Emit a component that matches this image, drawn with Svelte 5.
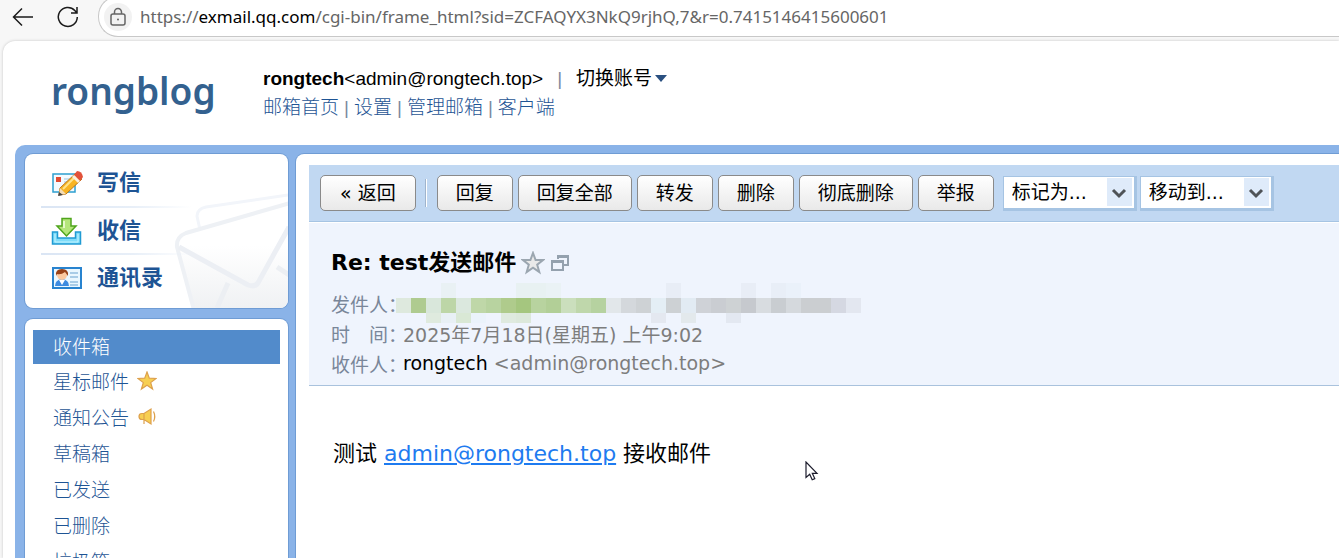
<script lang="ts">
	const folders = [
		{ name: '收件箱', active: true },
		{ name: '星标邮件', icon: 'star' },
		{ name: '通知公告', icon: 'horn' },
		{ name: '草稿箱' },
		{ name: '已发送' },
		{ name: '已删除' },
		{ name: '垃圾箱' }
	];

	const actions = ['回复', '回复全部', '转发', '删除', '彻底删除', '举报'];

	// masked sender: one colour per 15px cell
	const cells = [
		'#dee9de', '#afcb90', '#d9e7db', '#bdd6a7', '#dbe8de', '#bfd7a8', '#b8d3a0', '#afcb8c',
		'#a5c67f', '#b8d39f', '#b2cf97', '#cbdfbd', '#bfd7ab', '#b6d2a0', '#e2e7ea', '#d4d8dc',
		'#ced2d5', '#e4eef5', '#cdd1d4', '#e2ebf3', '#cfd2d7', '#cacdd2', '#ced2d4', '#c6c9ce',
		'#d8dce0', '#c9cdd1', '#d5d9dd', '#cbced1', '#cbced1', '#d5d8e2', '#e3e7f0'
	];
	const cellsAbove = [
		[3, '#e9f1f4'], [8, '#e8f1f2'], [9, '#e8f1f2'], [10, '#eaf2f5'],
		[18, '#e8edf6'], [23, '#e8edf6'], [25, '#e8eef7'], [26, '#eaf1fa']
	] as [number, string][];
	const cellsBelow = [
		[2, '#dfeade'], [3, '#e8f0f5'], [4, '#d9e8d5'], [5, '#ebf3fb'], [7, '#dfeadf'],
		[8, '#dce8db'], [17, '#e4e8f0'], [19, '#e3e9ec'], [22, '#e3e8f1']
	] as [number, string][];
</script>

<div class="browser">
	<header class="bar">
		<button class="nav" aria-label="Back">
			<svg width="22" height="22" viewBox="0 0 22 22"><path d="M21 11H1.500M10 2.500 1.500 11l8.500 8.500" /></svg>
		</button>
		<button class="nav" aria-label="Reload">
			<svg width="22" height="22" viewBox="0 0 22 22"><path d="M20.300 11A9.500 9.500 0 1 1 17.800 4.500L19.500 6.500M20 1v6h-6" /></svg>
		</button>
		<div class="address">
			<span class="lock">
				<svg width="18" height="20" viewBox="0 0 18 20">
					<rect x="2" y="7" width="14" height="11" rx="2" />
					<path d="M5.500 7V5a3.500 3.500 0 0 1 7 0v2" />
					<circle cx="9" cy="12.500" r="1" />
				</svg>
			</span>
			<span class="url">https://<b>exmail.qq.com</b>/cgi-bin/frame_html?sid=ZCFAQYX3NkQ9rjhQ,7&amp;r=0.7415146415600601</span>
		</div>
	</header>

	<div class="page">
		<header class="top">
			<div class="logo">rongblog</div>
			<div class="account">
				<div class="who">
					<span><strong>rongtech</strong>&lt;admin@rongtech.top&gt;</span>
					<i>|</i>
					<button class="switch">切换账号<svg width="12" height="8" viewBox="0 0 12 8"><path d="M0 0h12L6 7z" /></svg></button>
				</div>
				<nav class="links">
					<a href="#home">邮箱首页</a><i>|</i><a href="#settings">设置</a><i>|</i><a href="#manage">管理邮箱</a><i>|</i><a href="#client">客户端</a>
				</nav>
			</div>
		</header>

		<div class="frame">
			<aside>
				<nav class="card main-nav">
					<svg class="envelope" width="116" height="116" viewBox="0 0 116 116">
						<defs>
							<linearGradient id="paper" x1="0" y1="0" x2="0" y2="1">
								<stop offset="0.400" stop-color="#fff" />
								<stop offset="1" stop-color="#eff1f3" />
							</linearGradient>
						</defs>
						<path d="M116 3 34 15q-9 2-9 9l3 14" fill="none" stroke="#f2f5fa" stroke-width="3" />
						<path d="M118 11 14 41q-10 4-9 14l17 63h96z" fill="url(#paper)" stroke="#eef1f5" stroke-width="4" />
						<path d="M7 55l69 38q8 3 11-4l30-54" fill="none" stroke="#eceff4" stroke-width="5" />
						<path d="M56 91 45 116M105 75l12 8" fill="none" stroke="#eceff3" stroke-width="5" />
					</svg>
					<a href="#compose">
						<svg width="32" height="28" viewBox="0 0 32 28">
							<rect x="2" y="5" width="22" height="18" fill="#f3faff" stroke="#2d9fd0" stroke-width="1.500" />
							<rect x="5" y="8" width="5" height="5" fill="#e04b32" />
							<path d="M13 10h6M13 13h3" stroke="#9fc4dc" />
							<path d="M9 19 25 4l6 6-16 15-7 1z" fill="#f8b422" stroke="#b9761a" />
							<path d="M12 20 26 6" stroke="#ffe38b" stroke-width="2" />
							<path d="m23 6 3-4q5 0 6 6l-3 4z" fill="#e2523a" />
							<path d="m21 8 2-2 6 6-2 2z" fill="#fbeede" />
							<path d="m9 19-1 7 7-1z" fill="#f4dcb5" />
							<path d="m8 23-1 4 5-1z" fill="#444" />
						</svg>
						写信
					</a>
					<a href="#receive">
						<svg width="32" height="28" viewBox="0 0 32 28">
							<path d="M1.500 15h5v6h18v-6h5v12h-28z" fill="#7fdcf9" stroke="#209bd3" stroke-width="1.500" />
							<path d="M4 17v8h23v-8" fill="none" stroke="#c4f3ff" />
							<path d="M11 1.500h9V9h5l-9.500 10L6 9h5z" fill="#b4e67a" stroke="#4fa51c" stroke-width="1.500" />
							<path d="M13 4v7" stroke="#e5f9ca" stroke-width="2" />
						</svg>
						收信
					</a>
					<a href="#contacts">
						<svg width="32" height="28" viewBox="0 0 32 28">
							<rect x="2" y="4" width="28" height="20" fill="#e9f7ff" stroke="#2883cf" stroke-width="2" />
							<path d="M4 22q0-6 7-7 7 1 7 7z" fill="#3d8be0" />
							<path d="m8 16 3 5 3-5z" fill="#fff" />
							<circle cx="11" cy="11" r="5" fill="#fbc9a0" />
							<path d="M5 12q-1-7 6-7 7 0 6 7l-3-4q-4 3-8 2z" fill="#984219" />
							<path d="M19 9h8M19 13h8M19 18h8M19 21h8" stroke="#93bedf" stroke-width="1.500" />
						</svg>
						通讯录
					</a>
				</nav>

				<nav class="card folders">
					{#each folders as folder}
						<a href="#{folder.name}" class:active={folder.active}>
							{folder.name}
							{#if folder.icon === 'star'}
								<svg width="20" height="20" viewBox="0 0 20 20"><path d="m10 1 2.300 6.200 6.700.3-5.300 4.100L15.600 18 10 14.300 4.400 18l1.900-6.400L1 7.500l6.700-.3z" /></svg>
							{:else if folder.icon === 'horn'}
								<svg width="20" height="20" viewBox="0 0 20 20"><path d="M5 6.500h2L14 2v15l-7-4.500H5q-3 0-3-3t3-3zM7 6.500V17" /><path class="wave" d="M16.500 4.500q2.500 5 0 10" /></svg>
							{/if}
						</a>
					{/each}
				</nav>
			</aside>

			<main>
				<div class="toolbar">
					<button class="back">« 返回</button>
					<span class="divider"></span>
					{#each actions as action}
						<button>{action}</button>
					{/each}
					<div class="selects">
						{#each ['标记为...', '移动到...'] as option}
							<span class="select">
								<select aria-label={option}><option>{option}</option></select>
								<svg width="16" height="12" viewBox="0 0 16 12"><path d="m2 2 6 6 6-6" /></svg>
							</span>
						{/each}
					</div>
				</div>

				<section class="head">
					<h1>
						Re: test发送邮件
						<svg width="24" height="24" viewBox="0 0 24 24"><path d="m12 2 2.600 7H22l-5.800 4.700L18.300 21 12 16.700 5.700 21l2.100-7.300L2 9h7.400z" fill="#e9e9e9" stroke="#9ba6b0" stroke-width="2" /></svg>
						<svg class="window" width="20" height="20" viewBox="0 0 20 20"><path d="M8 6V3h10v9h-4M8 4h10M2 8h11v9H2zM2 9h11" /></svg>
					</h1>
					<dl>
						<div>
							<dt>发件人：</dt>
							<dd>
								<svg width="465" height="40" viewBox="0 0 465 40" shape-rendering="crispEdges">
									{#each cells as fill, i}
										<rect x={i * 15} y="15" width="15" height="15" {fill} />
									{/each}
									{#each cellsAbove as [i, fill]}
										<rect x={i * 15} y="0" width="15" height="15" {fill} />
									{/each}
									{#each cellsBelow as [i, fill]}
										<rect x={i * 15} y="30" width="15" height="10" {fill} />
									{/each}
								</svg>
							</dd>
						</div>
						<div>
							<dt>时　间：</dt>
							<dd>2025年7月18日(星期五) 上午9:02</dd>
						</div>
						<div>
							<dt>收件人：</dt>
							<dd><b>rongtech</b> &lt;admin@rongtech.top&gt;</dd>
						</div>
					</dl>
				</section>

				<article>测试 <a href="mailto:admin@rongtech.top">admin@rongtech.top</a> 接收邮件</article>
			</main>
		</div>
	</div>

	<svg class="cursor" width="14" height="20" viewBox="0 0 14 20"><path d="M1 1v15.500l3.700-3.300 2.500 5.600 2.600-1.200-2.500-5.300H12z" /></svg>
</div>

<style>
	:global(body) {
		margin: 0;
	}

	.browser {
		display: flex;
		flex-direction: column;
		position: relative;
		height: 100vh;
		overflow: hidden;
		background: #f7f7f7;
		font-family: 'Liberation Sans', 'Noto Sans CJK SC', sans-serif;
		font-size: 19px;
		color: #000;
	}

	a {
		color: #1e5494;
		text-decoration: none;
	}

	button {
		font: inherit;
		color: inherit;
		cursor: pointer;
	}

	.bar {
		display: flex;
		flex: none;
		height: 41px;
	}

	.nav {
		display: grid;
		place-items: center;
		width: 45px;
		height: 34px;
		padding: 0;
		border: 0;
		background: none;
	}

	.nav svg {
		fill: none;
		stroke: #1b1b1b;
		stroke-width: 1.5;
	}

	.address {
		display: flex;
		flex: 1;
		align-items: center;
		gap: 8px;
		box-sizing: border-box;
		height: 41px;
		margin: -4px 0 0 8px;
		padding-left: 5px;
		border: 1px solid #c8c8c8;
		border-right: 0;
		border-radius: 20px 0 0 20px;
		background: #fff;
	}

	.lock {
		display: grid;
		place-items: center;
		width: 28px;
		height: 28px;
		border-radius: 50%;
		background: #f2f2f2;
	}

	.lock svg {
		fill: none;
		stroke: #666;
		stroke-width: 1.5;
	}

	.lock circle {
		fill: #666;
		stroke: none;
	}

	.url {
		font-family: 'Noto Sans', sans-serif;
		font-size: 17px;
		white-space: nowrap;
		color: #666;
	}

	.url b {
		font-weight: 400;
		color: #000;
	}

	.page {
		display: flex;
		flex: 1;
		flex-direction: column;
		min-height: 0;
		margin-left: 3px;
		border-radius: 12px 0 0 0;
		background: #fff;
		box-shadow: 0 0 3px #c4c4c4;
	}

	.top {
		display: flex;
		flex: none;
		box-sizing: border-box;
		height: 104px;
		padding-left: 48px;
	}

	.logo {
		width: 212px;
		padding-top: 24px;
		font-family: 'Noto Sans', sans-serif;
		font-size: 37px;
		font-weight: 600;
		line-height: 52px;
		color: #33618f;
	}

	.account {
		padding-top: 23px;
		line-height: 29px;
	}

	.account i {
		font-style: normal;
		color: #7b8aa0;
	}

	.who {
		display: flex;
		gap: 14px;
	}

	.switch {
		display: flex;
		align-items: center;
		gap: 3px;
		padding: 0;
		border: 0;
		background: none;
	}

	.switch svg {
		fill: #2a5080;
	}

	.links {
		display: flex;
		gap: 5px;
		font-weight: 300;
	}

	.frame {
		display: flex;
		flex: 1;
		gap: 8px;
		min-height: 0;
		margin-left: 12px;
		padding: 9px 0 0 10px;
		border-radius: 10px 0 0 0;
		background: #8ab3e8;
	}

	aside {
		display: flex;
		flex: none;
		flex-direction: column;
		gap: 11px;
		width: 263px;
	}

	.card {
		border-radius: 8px;
		background: #fff;
		box-shadow: 0 0 0 1px #6f9cd4;
	}

	.main-nav {
		position: relative;
		flex: none;
		box-sizing: border-box;
		height: 154px;
		padding: 5px 16px;
		overflow: hidden;
	}

	.envelope {
		position: absolute;
		right: 0;
		bottom: 0;
	}

	.main-nav a {
		display: flex;
		position: relative;
		align-items: center;
		gap: 14px;
		box-sizing: border-box;
		height: 47px;
		padding-left: 10px;
		font-size: 22px;
		font-weight: 700;
		line-height: 28px;
	}

	.main-nav a + a {
		border-top: 2px solid;
		border-image: linear-gradient(90deg, #dae5f4, #e8eff8 40%, transparent 65%) 1;
	}

	.folders {
		flex: 1;
		min-height: 0;
		padding: 11px 8px 0;
		border-radius: 8px 8px 0 0;
	}

	.folders a {
		display: flex;
		align-items: center;
		gap: 8px;
		box-sizing: border-box;
		height: 36px;
		padding: 0 0 3px 20px;
		font-weight: 300;
	}

	.folders a.active {
		height: 34px;
		background: #528bcb;
		color: #fff;
	}

	.folders svg {
		fill: #f7cf52;
		stroke: #dda04c;
		stroke-width: 1.2;
	}

	.folders .wave {
		fill: none;
	}

	main {
		flex: 1;
		min-width: 0;
		padding: 11px 0 0 13px;
		border-radius: 8px 0 0 0;
		background: #fff;
		box-shadow: 0 0 0 1px #6f9cd4;
		font-family: 'DejaVu Sans', 'Noto Sans CJK SC', sans-serif;
	}

	.toolbar {
		display: flex;
		align-items: center;
		gap: 5px;
		box-sizing: border-box;
		height: 57px;
		padding-left: 11px;
		border-bottom: 1px solid #a6c4e3;
		background: #c1d8f2;
		white-space: nowrap;
	}

	.toolbar button {
		height: 36px;
		padding: 0 18px;
		border: 1px solid #8a8a8a;
		border-radius: 5px;
		background: linear-gradient(#fff, #e9e9e9);
		line-height: 28px;
	}

	.toolbar .back {
		padding: 0 19px;
	}

	.divider {
		width: 1px;
		height: 28px;
		margin: 0 5px 0 4px;
		border-left: 1px solid #a0b4cc;
		background: #fff;
	}

	.selects {
		display: flex;
		gap: 3px;
		margin-left: 4px;
	}

	.select {
		position: relative;
	}

	.select svg {
		position: absolute;
		top: 12px;
		right: 10px;
		fill: none;
		stroke: #4f5357;
		stroke-width: 3;
		pointer-events: none;
	}

	select {
		display: block;
		box-sizing: border-box;
		width: 134px;
		height: 35px;
		padding: 0 30px 0 8px;
		border: solid #a6c4e3;
		border-width: 1px 3px 3px 1px;
		border-radius: 0;
		appearance: none;
		background: linear-gradient(#dfebfa, #dfebfa) right 2px center / 25px 28px no-repeat #fff;
		font: inherit;
		color: #000;
	}

	.head {
		padding: 26px 0 7px 22px;
		border-top: 1px solid #fff;
		border-bottom: 1px solid #a9c2dd;
		background: #eff4fd;
	}

	h1 {
		display: flex;
		align-items: center;
		gap: 5px;
		margin: 0 0 11px;
		font-size: 22px;
		font-weight: 700;
		line-height: 28px;
	}

	.window {
		fill: none;
		stroke: #94a1ae;
		stroke-width: 2;
	}

	dl {
		margin: 0;
		color: #7d7d7d;
	}

	dl div {
		display: flex;
		align-items: center;
		height: 30px;
	}

	dt {
		width: 72px;
		white-space: nowrap;
		color: #798699;
	}

	dd {
		margin: 0;
	}

	dd svg {
		display: block;
		margin-left: -7px;
	}

	dd b {
		font-weight: 400;
		color: #000;
	}

	article {
		padding: 52px 24px;
		font-size: 22px;
		line-height: 32px;
	}

	article a {
		color: #1e7bf0;
		text-decoration: underline;
	}

	.cursor {
		position: absolute;
		top: 461px;
		left: 805px;
		fill: #fff;
		stroke: #1c1c2c;
		stroke-width: 1.2;
	}
</style>
